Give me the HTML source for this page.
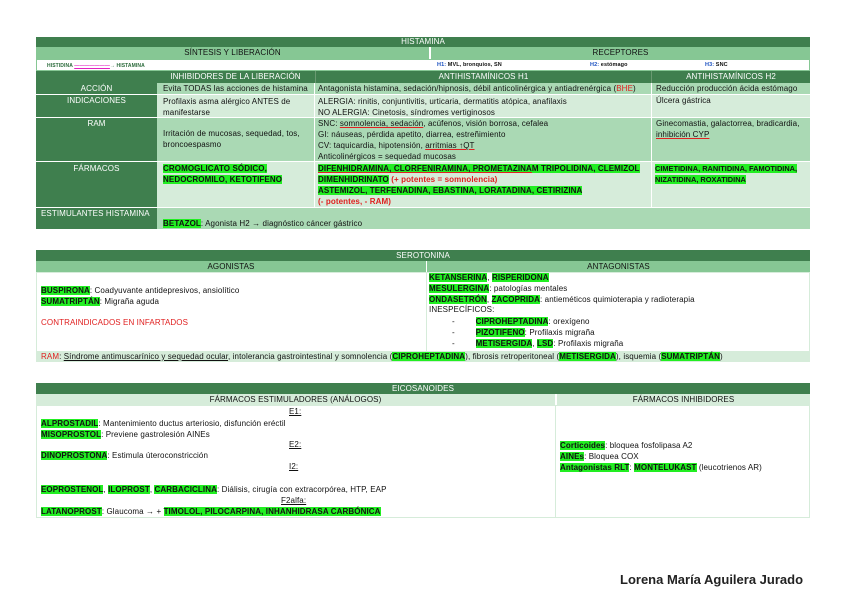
<!DOCTYPE html>
<html><head><meta charset="utf-8">
<style>
*{margin:0;padding:0;box-sizing:border-box}
body{width:848px;height:599px;background:#fff;position:relative;font-family:"Liberation Sans",sans-serif;font-size:8px;letter-spacing:0.1px;color:#111;overflow:hidden}
.a{position:absolute;white-space:nowrap}
.dk{background:#3f7f4e;color:#fff}
.md{background:#86c794}
.lt{background:#d6ecda}
.mg{background:#aad9b4}
.c{text-align:center}
.hl{background:#22ee22;font-weight:bold}
.r{color:#e02020}
.b{font-weight:bold}
.u{text-decoration:underline}
.ur{text-decoration:underline;text-decoration-color:#e02020}
</style></head><body>
<div class="a dk c" style="left:36px;top:37px;width:774px;height:10px;line-height:10px">HISTAMINA</div>
<div class="a md c" style="left:36px;top:47px;width:393px;height:12px;line-height:12px">SÍNTESIS Y LIBERACIÓN</div>
<div class="a md c" style="left:431px;top:47px;width:379px;height:12px;line-height:12px">RECEPTORES</div>
<div class="a" style="left:36px;top:59px;width:774px;height:12px;border:1px solid #86c794;background:#fff"></div>
<div class="a" style="left:47px;top:63px;font-size:5px;color:#2a6a3a;font-weight:bold">HISTIDINA <span style="color:#e020c0;text-decoration:underline">———————</span>→ HISTAMINA</div>
<div class="a" style="left:437px;top:62px;font-size:5.5px;font-weight:bold"><span style="color:#1a50c0">H1:</span> MVL, bronquios, SN</div>
<div class="a" style="left:590px;top:62px;font-size:5.5px;font-weight:bold"><span style="color:#1a50c0">H2:</span> estómago</div>
<div class="a" style="left:705px;top:62px;font-size:5.5px;font-weight:bold"><span style="color:#1a50c0">H3:</span> SNC</div>
<div class="a dk" style="left:36px;top:71px;width:774px;height:12px"></div>
<div class="a dk c" style="left:157px;top:71px;width:157px;height:12px;line-height:12px">INHIBIDORES DE LA LIBERACIÓN</div>
<div class="a dk c" style="left:315px;top:71px;width:336px;height:12px;line-height:12px;border-left:1px solid #6a9a72">ANTIHISTAMÍNICOS H1</div>
<div class="a dk c" style="left:651px;top:71px;width:159px;height:12px;line-height:12px;border-left:1px solid #6a9a72">ANTIHISTAMÍNICOS H2</div>
<div class="a dk" style="left:36px;top:83px;width:121px;height:146px"></div>
<div class="a mg" style="left:157px;top:83px;width:653px;height:11px"></div>
<div class="a lt" style="left:157px;top:94px;width:653px;height:23px"></div>
<div class="a mg" style="left:157px;top:117px;width:653px;height:44px"></div>
<div class="a lt" style="left:157px;top:161px;width:653px;height:46px"></div>
<div class="a mg" style="left:157px;top:207px;width:653px;height:22px"></div>
<div class="a" style="left:36px;top:94px;width:774px;height:1px;background:#fff"></div>
<div class="a" style="left:36px;top:117px;width:774px;height:1px;background:#fff"></div>
<div class="a" style="left:36px;top:161px;width:774px;height:1px;background:#fff"></div>
<div class="a" style="left:36px;top:207px;width:774px;height:1px;background:#fff"></div>
<div class="a" style="left:314px;top:83px;width:1px;height:124px;background:#fff"></div>
<div class="a" style="left:651px;top:83px;width:1px;height:124px;background:#fff"></div>
<div class="a c" style="left:36px;top:84px;width:121px;color:#fff">ACCIÓN</div>
<div class="a c" style="left:36px;top:96px;width:121px;color:#fff">INDICACIONES</div>
<div class="a c" style="left:36px;top:119px;width:121px;color:#fff">RAM</div>
<div class="a c" style="left:36px;top:164px;width:121px;color:#fff">FÁRMACOS</div>
<div class="a" style="left:41px;top:209px;color:#fff">ESTIMULANTES HISTAMINA</div>
<div class="a" style="left:163px;top:84px">Evita TODAS las acciones de histamina</div>
<div class="a" style="left:318px;top:84px">Antagonista histamina, sedación/hipnosis, débil anticolinérgica y antiadrenérgica (<span class="r">BHE</span>)</div>
<div class="a" style="left:656px;top:84px">Reducción producción ácida estómago</div>
<div class="a" style="left:163px;top:96px;line-height:11px">Profilaxis asma alérgico ANTES de<br>manifestarse</div>
<div class="a" style="left:318px;top:96px;line-height:11px">ALERGIA: rinitis, conjuntivitis, urticaria, dermatitis atópica, anafilaxis<br>NO ALERGIA: Cinetosis, síndromes vertiginosos</div>
<div class="a" style="left:656px;top:96px">Úlcera gástrica</div>
<div class="a" style="left:163px;top:128px;line-height:11px">Irritación de mucosas, sequedad, tos,<br>broncoespasmo</div>
<div class="a" style="left:318px;top:118px;line-height:11px">SNC: <span class="ur">somnolencia, sedación</span>, acúfenos, visión borrosa, cefalea<br>GI: náuseas, pérdida apetito, diarrea, estreñimiento<br>CV: taquicardia, hipotensión, <span class="ur">arritmias ↑QT</span><br>Anticolinérgicos = sequedad mucosas</div>
<div class="a" style="left:656px;top:118px;line-height:11px">Ginecomastia, galactorrea, bradicardia,<br><span class="ur">inhibición CYP</span></div>
<div class="a" style="left:163px;top:163px;line-height:11px"><span class="hl">CROMOGLICATO SÓDICO,</span><br><span class="hl">NEDOCROMILO, KETOTIFENO</span></div>
<div class="a" style="left:318px;top:163px;line-height:11px"><span class="hl ur">DIFENHIDRAMINA, CLORFENIRAMINA, PROMETAZINA</span><span class="hl">M TRIPOLIDINA, CLEMIZOL</span><br><span class="hl">DIMENHIDRINATO</span> <span class="r b">(+ potentes = somnolencia)</span><br><span class="hl">ASTEMIZOL, TERFENADINA, EBASTINA, LORATADINA, CETIRIZINA</span><br><span class="r b">(- potentes, - RAM)</span></div>
<div class="a" style="left:655px;top:163px;line-height:11px;font-size:7.4px;letter-spacing:0"><span class="hl">CIMETIDINA, RANITIDINA, FAMOTIDINA,</span><br><span class="hl">NIZATIDINA, ROXATIDINA</span></div>
<div class="a" style="left:163px;top:219px"><span class="hl">BETAZOL</span>: Agonista H2 → diagnóstico cáncer gástrico</div>

<div class="a dk c" style="left:36px;top:250px;width:774px;height:11px;line-height:11px">SEROTONINA</div>
<div class="a md c" style="left:36px;top:261px;width:390px;height:11px;line-height:11px">AGONISTAS</div>
<div class="a md c" style="left:427px;top:261px;width:383px;height:11px;line-height:11px">ANTAGONISTAS</div>
<div class="a" style="left:36px;top:272px;width:774px;height:80px;border:1px solid #d6ecda"></div>
<div class="a" style="left:426px;top:272px;width:1px;height:80px;background:#d6ecda"></div>
<div class="a" style="left:41px;top:285px;line-height:11px"><span class="hl">BUSPIRONA</span>: Coadyuvante antidepresivos, ansiolítico<br><span class="hl">SUMATRIPTÁN</span>: Migraña aguda</div>
<div class="a r" style="left:41px;top:318px">CONTRAINDICADOS EN INFARTADOS</div>
<div class="a" style="left:429px;top:273px;line-height:10.8px"><span class="hl">KETANSERINA</span>, <span class="hl">RISPERIDONA</span><br><span class="hl">MESULERGINA</span>: patologías mentales<br><span class="hl">ONDASETRÓN</span>, <span class="hl">ZACOPRIDA</span>: antieméticos quimioterapia y radioterapia<br>INESPECÍFICOS:</div>
<div class="a" style="left:452px;top:317px;line-height:10.8px">-&nbsp;&nbsp;&nbsp;&nbsp;&nbsp;&nbsp;&nbsp;&nbsp;&nbsp;<span class="hl">CIPROHEPTADINA</span>: orexígeno<br>-&nbsp;&nbsp;&nbsp;&nbsp;&nbsp;&nbsp;&nbsp;&nbsp;&nbsp;<span class="hl">PIZOTIFENO</span>: Profilaxis migraña<br>-&nbsp;&nbsp;&nbsp;&nbsp;&nbsp;&nbsp;&nbsp;&nbsp;&nbsp;<span class="hl">METISERGIDA</span>, <span class="hl">LSD</span>: Profilaxis migraña</div>
<div class="a lt" style="left:36px;top:351px;width:774px;height:11px;line-height:11px;padding-left:5px"><span class="r">RAM</span>: <span class="u">Síndrome antimuscarínico y sequedad ocular</span>, intolerancia gastrointestinal y somnolencia (<span class="hl">CIPROHEPTADINA</span>), fibrosis retroperitoneal (<span class="hl">METISERGIDA</span>), isquemia (<span class="hl">SUMATRIPTÁN</span>)</div>

<div class="a dk c" style="left:36px;top:383px;width:774px;height:11px;line-height:11px">EICOSANOIDES</div>
<div class="a lt c" style="left:36px;top:394px;width:519px;height:11px;line-height:11px">FÁRMACOS ESTIMULADORES (ANÁLOGOS)</div>
<div class="a lt c" style="left:557px;top:394px;width:253px;height:11px;line-height:11px">FÁRMACOS INHIBIDORES</div>
<div class="a" style="left:36px;top:405px;width:774px;height:113px;border:1px solid #d6ecda"></div>
<div class="a" style="left:555px;top:405px;width:1px;height:113px;background:#d6ecda"></div>
<div class="a u" style="left:289px;top:407px">E1:</div>
<div class="a" style="left:41px;top:418px;line-height:11px"><span class="hl">ALPROSTADIL</span>: Mantenimiento ductus arteriosio, disfunción eréctil<br><span class="hl">MISOPROSTOL</span>: Previene gastrolesión AINEs</div>
<div class="a u" style="left:289px;top:440px">E2:</div>
<div class="a" style="left:41px;top:451px"><span class="hl">DINOPROSTONA</span>: Estimula úteroconstricción</div>
<div class="a u" style="left:289px;top:462px">I2:</div>
<div class="a" style="left:41px;top:485px"><span class="hl">EOPROSTENOL</span>, <span class="hl">ILOPROST</span>, <span class="hl">CARBACICLINA</span>: Diálisis, cirugía con extracorpórea, HTP, EAP</div>
<div class="a u" style="left:281px;top:496px">F2alfa:</div>
<div class="a" style="left:41px;top:507px"><span class="hl">LATANOPROST</span>: Glaucoma → + <span class="hl">TIMOLOL, PILOCARPINA, INHANHIDRASA CARBÓNICA</span></div>
<div class="a" style="left:560px;top:440px;line-height:11px"><span class="hl">Corticoides</span>: bloquea fosfolipasa A2<br><span class="hl">AINEs</span>: Bloquea COX<br><span class="hl">Antagonistas RLT</span>: <span class="hl">MONTELUKAST</span> (leucotrienos AR)</div>

<div class="a b" style="left:620px;top:572px;font-size:13px;letter-spacing:0;color:#222">Lorena María Aguilera Jurado</div>
</body></html>
